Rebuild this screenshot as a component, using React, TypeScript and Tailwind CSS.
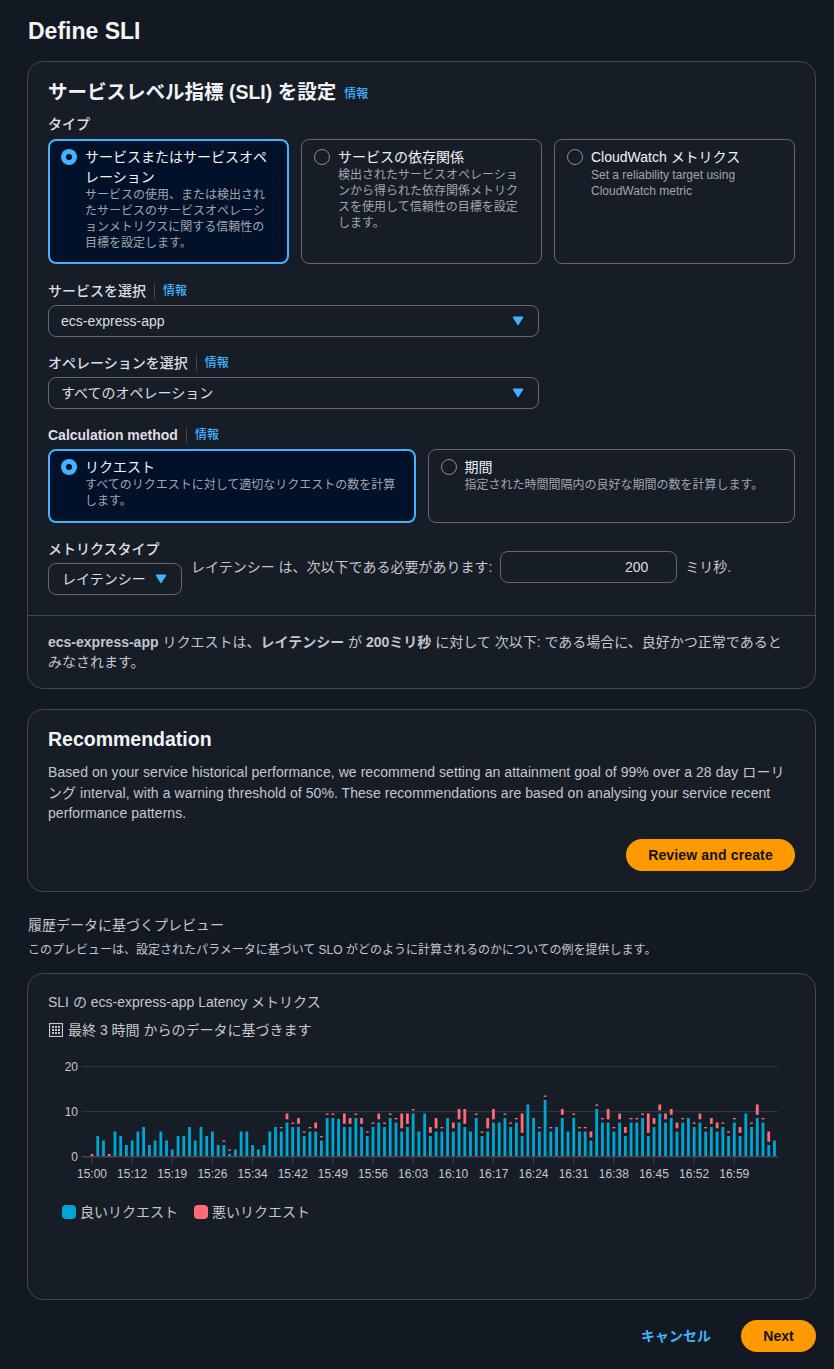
import React from 'react';

const font = "font-['Liberation_Sans','Noto_Sans_CJK_JP',sans-serif]";

// [good, badFrom, badTo] - bad omitted when the bar has no bad requests
const bars: number[][] = [
  [0, 0, 0.6], [4.6], [3.6], [0, 0, 0.6], [5.6], [4.6], [2.6], [3.6], [5.6], [6.6],
  [2.6], [3.6], [5.6], [3.6], [1.6], [4.6], [4.6], [6.6], [3.6], [6.6],
  [4.6], [5.6], [2.6], [2.6, 3.3, 3.6], [0.6, 1.3, 1.6], [1.6], [5.6], [5.6], [2.6], [1.6],
  [2.6], [5.6], [6.6], [5.6, 6.3, 6.6], [7.6, 8.3, 9.6], [6.6, 7.3, 7.6], [6.6, 7.3, 8.6], [4.6, 5.3, 5.6], [5.6, 6.3, 6.6], [5.6, 6.3, 7.6],
  [3.6, 4.3, 4.6], [8.6, 9.3, 9.6], [8.6, 9.3, 9.6], [8.4], [6.6, 7.3, 9.6], [6.6, 7.3, 8.6], [8.6, 9.3, 9.6], [6.6, 7.3, 8.6], [4.6, 5.3, 5.6], [6.6, 7.3, 7.6],
  [7.6, 8.3, 9.6], [6.6, 7.3, 7.6], [8.6, 9.3, 9.6], [7.6, 8.3, 8.6], [5.6, 6.3, 9.6], [6.6, 7.3, 9.6], [9.6, 10.3, 10.6], [5.6], [9.6], [4.6, 5.3, 6.6],
  [5.6, 6.3, 8.6], [5.6, 6.3, 6.6], [8.6], [5.6, 6.3, 7.6], [7.6, 8.3, 10.6], [6.6, 7.3, 10.6], [5.6], [8.6, 9.3, 9.6], [4.6, 5.3, 5.6], [5.6, 6.3, 8.6],
  [7.6, 8.3, 10.6], [7.6], [8.6, 9.3, 9.6], [6.6, 7.3, 7.6], [7.6, 8.3, 8.6], [4.6, 5.3, 9.6], [11.6], [8.6], [5.6, 6.3, 6.6], [12.6, 13.3, 13.6],
  [5.6, 6.3, 6.6], [6.6], [8.6, 9.3, 10.6], [5.6], [8.6, 9.3, 9.6], [5.6, 6.3, 6.6], [5.6, 6.3, 6.6], [3.6, 4.3, 5.6], [10.6, 11.3, 11.6], [7.6, 8.3, 8.6],
  [7.6, 8.3, 10.6], [5.6, 6.3, 6.6], [7.6, 8.3, 9.6], [4.6, 5.3, 6.6], [7.6, 8.3, 8.6], [7.6, 8.3, 8.6], [8.6, 9.3, 9.6], [4.6, 5.3, 9.6], [6.6, 7.3, 8.6], [9.6, 10.3, 11.6],
  [7.6, 8.3, 9.6], [8.6, 9.3, 10.6], [5.6, 6.3, 7.6], [7.6, 8.3, 8.6], [8.6], [6.6, 7.3, 7.6], [7.6, 8.3, 9.6], [5.6, 6.3, 6.6], [6.6, 7.3, 8.6], [5.6, 6.3, 7.6],
  [6.6, 7.3, 7.6], [4.6, 5.3, 5.6], [7.6, 8.3, 8.6], [4.6, 5.3, 6.6], [9.6], [6.6, 7.3, 7.6], [8.6, 9.3, 11.6], [7.6, 8.3, 8.6], [2.6, 3.3, 5.6], [3.6],
];

const ticks = ['15:00', '15:12', '15:19', '15:26', '15:34', '15:42', '15:49', '15:56', '16:03', '16:10', '16:17', '16:24', '16:31', '16:38', '16:45', '16:52', '16:59'];

function Caret() {
  return (
    <svg width="12" height="10" viewBox="0 0 12 10" className="shrink-0">
      <path d="M1 1h10L6 9z" fill="#42b4ff" stroke="#42b4ff" strokeWidth="1" strokeLinejoin="round" />
    </svg>
  );
}

function Info({ className = '' }: { className?: string }) {
  return <span className={`text-xs font-medium text-[#42b4ff] ${className}`}>情報</span>;
}

function FieldLabel({ children, bold }: { children: React.ReactNode; bold?: boolean }) {
  return (
    <div className="flex items-center h-5 text-sm text-[#dedee3]">
      <span className={bold ? 'font-bold' : 'font-medium'}>{children}</span>
      <span className="mx-2 h-4 w-px bg-[#424650]" />
      <Info />
    </div>
  );
}

function Tile({ title, desc, selected }: { title: string; desc: string; selected?: boolean }) {
  return (
    <div
      className={`flex gap-2 rounded-lg pl-[11px] pr-3 pt-1.5 border-2 ${
        selected ? 'border-[#42b4ff] bg-[#001129]' : 'border-transparent outline outline-1 -outline-offset-1 outline-[#656871]'
      }`}>
      <div className="pt-0.5 shrink-0">
        {selected ?
        <div className="h-4 w-4 rounded-full bg-[#42b4ff] flex items-center justify-center">
            <div className="h-1.5 w-1.5 rounded-full bg-[#001129]" />
          </div> :
        <div className="h-4 w-4 rounded-full border border-[#8c8c94]" />
        }
      </div>
      <div className="min-w-0">
        <div className="text-sm leading-5 text-[#f3f3f7]">{title}</div>
        <div className="text-xs leading-4 text-[#a4a4ad]">{desc}</div>
      </div>
    </div>
  );
}

function Select({ value }: { value: string }) {
  return (
    <div className="mt-1 w-[491px] h-8 rounded-lg border border-[#656871] flex items-center justify-between pl-3 pr-[14px] text-sm text-[#dedee3]">
      <span>{value}</span>
      <Caret />
    </div>
  );
}

function Chart() {
  const y = (v: number) => 96.7 - v * 4.5;
  const x = (i: number) => 44 + i * 5.735;
  return (
    <svg width="747" height="122" className="block">
      {[20, 10].map((v) =>
      <line key={v} x1="34" x2="730" y1={y(v)} y2={y(v)} stroke="#353a44" strokeWidth="1" />
      )}
      {bars.map((b, i) =>
      <g key={i}>
          {b[0] > 0 && <rect x={x(i) - 1.4} y={y(b[0])} width="2.8" height={b[0] * 4.5} fill="#00a6d0" />}
          {b.length > 1 && <rect x={x(i) - 1.4} y={y(b[2])} width="2.8" height={(b[2] - b[1]) * 4.5} fill="#ff6b74" />}
        </g>
      )}
      <line x1="34" x2="730" y1="96.7" y2="96.7" stroke="#424650" strokeWidth="1.5" />
      {ticks.map((t, i) =>
      <g key={t}>
          <line x1={44 + i * 40.14} x2={44 + i * 40.14} y1="97" y2="104" stroke="#424650" />
          <text x={44 + i * 40.14} y="118" textAnchor="middle" fontSize="12" fill="#c6c6cd">{t}</text>
        </g>
      )}
      {[20, 10, 0].map((v) =>
      <text key={v} x="30" y={y(v) + 4} textAnchor="end" fontSize="12" fill="#c6c6cd">{v}</text>
      )}
    </svg>
  );
}

export default function App() {
  return (
    <div className={`min-h-[1369px] bg-[#131922] pl-[27px] pr-[18px] pt-[17px] text-[#c6c6cd] ${font}`}>
      <h1 className="pl-px text-[23px] leading-7 font-bold text-[#f3f3f7]">Define SLI</h1>

      {/* SLI settings */}
      <section className="mt-[16px] rounded-2xl border border-[#424650] bg-[#161d26]">
        <div className="pl-5 pr-5 pt-[17px] pb-5">
          <div className="flex items-center h-7">
            <h2 className="text-[19.5px] font-bold text-[#f3f3f7]">サービスレベル指標 (SLI) を設定</h2>
            <Info className="ml-2 mt-0.5" />
          </div>
          <div className="mt-[7px] text-sm leading-5 font-medium text-[#dedee3]">タイプ</div>
          <div className="mt-[5px] grid grid-cols-3 gap-3 auto-rows-[125px]">
            <Tile selected title="サービスまたはサービスオペレーション" desc="サービスの使用、または検出されたサービスのサービスオペレーションメトリクスに関する信頼性の目標を設定します。" />
            <Tile title="サービスの依存関係" desc="検出されたサービスオペレーションから得られた依存関係メトリクスを使用して信頼性の目標を設定します。" />
            <Tile title="CloudWatch メトリクス" desc="Set a reliability target using CloudWatch metric" />
          </div>

          <div className="mt-[17px]">
            <FieldLabel>サービスを選択</FieldLabel>
            <Select value="ecs-express-app" />
          </div>
          <div className="mt-4">
            <FieldLabel>オペレーションを選択</FieldLabel>
            <Select value="すべてのオペレーション" />
          </div>

          <div className="mt-4">
            <FieldLabel bold>Calculation method</FieldLabel>
            <div className="mt-1 grid grid-cols-2 gap-3 auto-rows-[74px]">
              <Tile selected title="リクエスト" desc="すべてのリクエストに対して適切なリクエストの数を計算します。" />
              <Tile title="期間" desc="指定された時間間隔内の良好な期間の数を計算します。" />
            </div>
          </div>

          <div className="mt-4 flex items-start">
            <div>
              <div className="text-sm leading-5 font-medium text-[#dedee3]">メトリクスタイプ</div>
              <div className="mt-1 w-[134px] h-8 rounded-lg border border-[#656871] flex items-center justify-between pl-[13px] pr-[14px] text-sm text-[#dedee3]">
                <span>レイテンシー</span>
                <Caret />
              </div>
            </div>
            <div className="ml-[9px] mt-3 flex items-start text-sm">
              <span className="leading-8">レイテンシー は、次以下である必要があります:</span>
              <div className="ml-2 w-[177px] h-8 rounded-lg border border-[#656871] flex items-center justify-end pr-7 text-[#dedee3]">200</div>
              <span className="ml-2 leading-8">ミリ秒.</span>
            </div>
          </div>
        </div>
        <div className="border-t border-[#424650] px-5 pt-4 pb-4 text-sm leading-5">
          <b>ecs-express-app</b> リクエストは、<b>レイテンシー</b> が <b>200ミリ秒</b> に対して 次以下: である場合に、良好かつ正常であると
          <br />
          みなされます。
        </div>
      </section>

      {/* Recommendation */}
      <section className="mt-5 rounded-2xl border border-[#424650] bg-[#161d26] pl-5 pr-5 pt-[15px] h-[183px]">
        <h2 className="text-[19.5px] leading-7 font-bold text-[#f3f3f7]">Recommendation</h2>
        <p className="mt-[9px] text-sm leading-[20.5px] tracking-[0.06px]">
          Based on your service historical performance, we recommend setting an attainment goal of 99% over a 28 day ローリング interval, with a warning threshold of 50%. These recommendations are based on analysing your service recent performance patterns.
        </p>
        <div className="mt-[15px] flex justify-end">
          <button className="h-8 w-[169px] rounded-2xl bg-[#ff9900] text-sm tracking-[0.15px] font-bold text-[#0f141a]">Review and create</button>
        </div>
      </section>

      {/* Preview */}
      <div className="mt-[23px] pl-px text-sm leading-5">履歴データに基づくプレビュー</div>
      <div className="mt-[7px] pl-px text-xs leading-4 text-[#c6c6cd]">このプレビューは、設定されたパラメータに基づいて SLO がどのように計算されるのかについての例を提供します。</div>

      <section className="mt-[15px] h-[327px] rounded-2xl border border-[#424650] bg-[#161d26] pl-5 pr-5 pt-[18px]">
        <div className="text-sm leading-5">SLI の ecs-express-app Latency メトリクス</div>
        <div className="mt-2 flex items-center text-sm leading-5">
          <svg width="14" height="14" viewBox="0 0 14 14" className="ml-px mr-[5px]" fill="none" stroke="#c6c6cd">
            <rect x="0.5" y="0.5" width="13" height="13" strokeWidth="1.2" />
            <path d="M3 4h2M6 4h2M9 4h2M3 7h2M6 7h2M9 7h2M3 10h2M6 10h2M9 10h2" strokeWidth="2" />
          </svg>
          最終 3 時間 からのデータに基づきます
        </div>
        <div className="mt-5">
          <Chart />
        </div>
        <div className="mt-5 ml-[14px] flex items-center text-sm leading-5">
          <span className="h-[14px] w-[14px] rounded-sm bg-[#00a6d0] mr-1" />
          <span>良いリクエスト</span>
          <span className="h-[14px] w-[14px] rounded-sm bg-[#ff6b74] ml-4 mr-1" />
          <span>悪いリクエスト</span>
        </div>
      </section>

      <div className="mt-5 flex items-center justify-end">
        <span className="text-sm font-bold text-[#42b4ff]">キャンセル</span>
        <button className="ml-[30px] h-8 w-[75px] rounded-2xl bg-[#ff9900] text-sm font-bold text-[#0f141a]">Next</button>
      </div>
    </div>
  );
}
